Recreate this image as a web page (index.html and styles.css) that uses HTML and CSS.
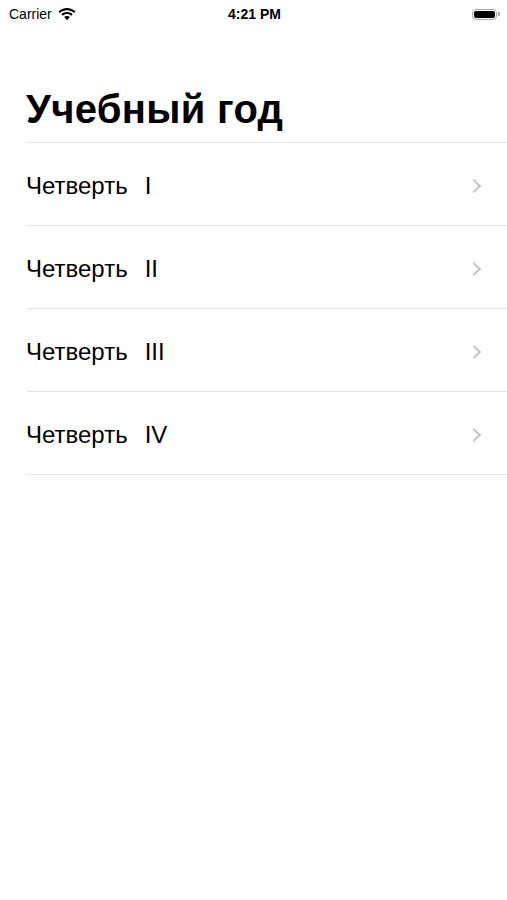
FILE: index.html
```html
<!DOCTYPE html>
<html>
<head>
    <meta charset="UTF-8">
    <title>Учебный год</title>
    <link rel="stylesheet" href="styles.css">
</head>
<body>
    <div class="status-bar">
        <div class="status-left">
            <span>Carrier</span>
            <svg class="wifi" viewBox="0 0 18 13">
                <path d="M9 2.2c2.7 0 5.2 1 7.1 2.8l1.4-1.5C15.2 1.3 12.2 0 9 0S2.8 1.3.5 3.5l1.4 1.5C3.8 3.2 6.3 2.2 9 2.2z"/>
                <path d="M9 6.1c1.6 0 3.1.6 4.3 1.7l1.4-1.5C13.2 4.8 11.2 4 9 4s-4.2.8-5.7 2.3l1.4 1.5C5.9 6.7 7.4 6.1 9 6.1z"/>
                <path d="M9 9.9c.6 0 1.1.2 1.5.6L9 12.2l-1.5-1.7c.4-.4.9-.6 1.5-.6z M9 8c1.1 0 2.1.4 2.9 1.1l-1.4 1.4C10.1 10.1 9.6 9.9 9 9.9s-1.1.2-1.5.6L6.1 9.1C6.9 8.4 7.9 8 9 8z"/>
            </svg>
        </div>
        <div class="status-time">4:21 PM</div>
        <div class="status-right">
            <div class="battery">
                <div class="battery-level"></div>
            </div>
            <div class="battery-cap"></div>
        </div>
    </div>

    <h1 class="title">Учебный год</h1>

    <ul class="list">
        <li class="row"><span class="row-text">Четверть   I</span><span class="chevron"></span></li>
        <li class="row"><span class="row-text">Четверть   II</span><span class="chevron"></span></li>
        <li class="row"><span class="row-text">Четверть   III</span><span class="chevron"></span></li>
        <li class="row"><span class="row-text">Четверть   IV</span><span class="chevron"></span></li>
    </ul>
</body>
</html>
```

FILE: styles.css
```css
body {
    margin: 0;
    width: 507px;
    height: 900px;
    background-color: #fff;
    color: #000;
    font-family: "Liberation Sans", "Noto Sans", Arial, sans-serif;
}

/* статус бар */
.status-bar {
    height: 28px;
    display: flex;
    align-items: center;
    justify-content: space-between;
    padding: 0 7px 0 9px;
    font-size: 14px;
}

.status-left {
    flex: 1;
    display: flex;
    align-items: center;
    gap: 6px;
}

.wifi {
    width: 18px;
    height: 13px;
    fill: #000;
}

.status-time {
    font-weight: bold;
    font-size: 14px;
}

.status-right {
    flex: 1;
    display: flex;
    justify-content: flex-end;
    align-items: center;
}

.battery {
    width: 25px;
    height: 11px;
    border: 1px solid #aaa;
    border-radius: 4px;
    padding: 1px;
    box-sizing: border-box;
}

.battery-level {
    width: 100%;
    height: 100%;
    background-color: #000;
    border-radius: 2px;
}

.battery-cap {
    width: 2px;
    height: 4px;
    margin-left: 1px;
    background-color: #aaa;
    border-radius: 0 1px 1px 0;
}

/* заголовок */
.title {
    margin: 0;
    padding: 57px 0 9px 26px;
    font-size: 40px;
    font-weight: bold;
    line-height: 48px;
    letter-spacing: 0.3px;
}

/* список */
.list {
    list-style: none;
    margin: 0 0 0 26px;
    padding: 0;
    border-top: 1px solid #e6e6e6;
}

.row {
    height: 82px;
    display: flex;
    align-items: center;
    justify-content: space-between;
    border-bottom: 1px solid #e6e6e6;
}

.row-text {
    font-size: 24px;
    padding-top: 3px;
    white-space: pre;
    word-spacing: -1px;
}

.chevron {
    width: 8px;
    height: 8px;
    margin: 3px 28px 0 0;
    border-top: 2px solid #c4c4c7;
    border-right: 2px solid #c4c4c7;
    transform: rotate(45deg);
}
```
